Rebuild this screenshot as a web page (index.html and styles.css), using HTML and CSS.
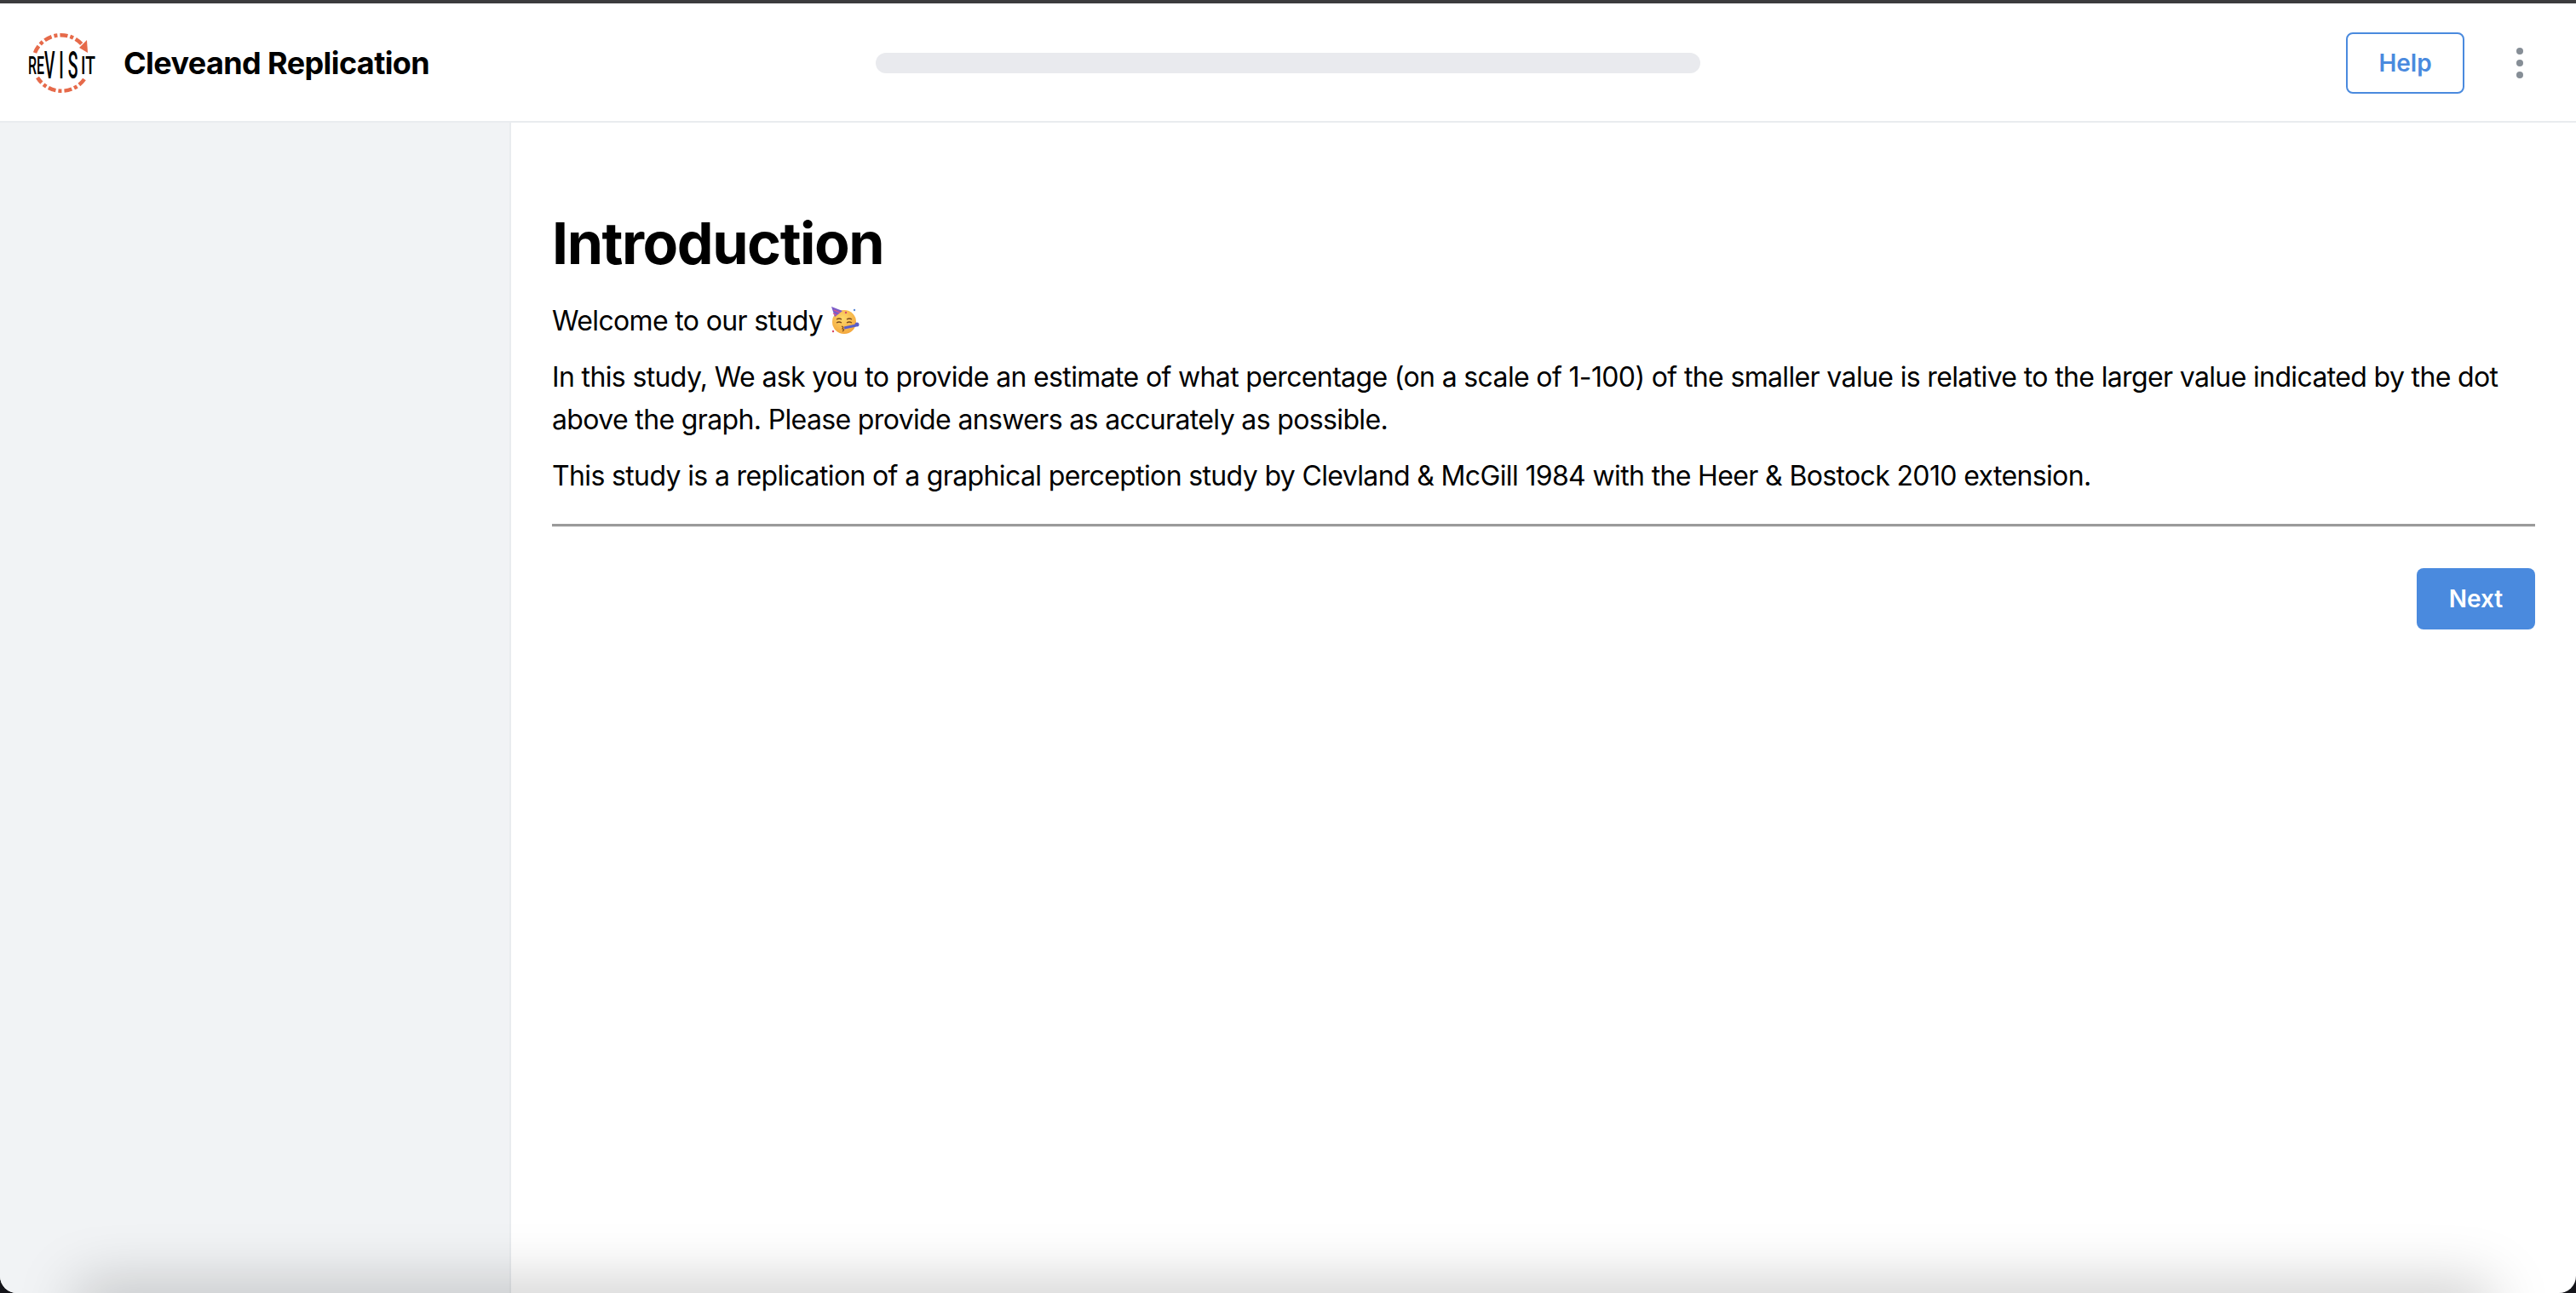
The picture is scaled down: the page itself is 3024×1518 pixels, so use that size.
FILE: index.html
```html
<!DOCTYPE html>
<html lang="en">

<head>
    <meta charset="UTF-8" />
    <meta name="viewport" content="width=device-width, initial-scale=1.0" />
    <title>Cleveand Replication</title>
    <link rel="stylesheet" href="styles.css">
</head>

<body>
    <div class="window">
        <header class="header">
            <div class="brand">
                <svg class="logo" viewBox="0 0 84 76" width="84" height="76">
                    <path class="logo-ring" d="M9 26 A33 33 0 0 1 65 17" />
                    <path class="logo-ring" d="M67 57 A33 33 0 0 1 12 55" />
                    <polygon class="logo-arrow" points="71,26 61,20 70,11" />
                    <text class="logo-small" transform="translate(1 51) scale(.55 1)">RE</text>
                    <text class="logo-big" transform="translate(20 56) scale(.44 1)">VIS</text>
                    <text class="logo-small" transform="translate(63 51) scale(.66 1)">IT</text>
                </svg>
                <span class="brand-name">Cleveand Replication</span>
            </div>
            <div class="progress"></div>
            <div class="actions">
                <button class="btn-help" type="button">Help</button>
                <div class="menu-dots"><i></i><i></i><i></i></div>
            </div>
        </header>

        <div class="body">
            <aside class="sidebar"></aside>
            <main class="content">
                <h1>Introduction</h1>
                <p>Welcome to our study <span class="emoji">
                    <svg viewBox="0 0 34 34" width="34" height="34">
                        <defs>
                            <radialGradient id="face" cx="0.45" cy="0.35" r="0.7">
                                <stop offset="0" stop-color="#fdd96a" />
                                <stop offset="1" stop-color="#f3a43a" />
                            </radialGradient>
                        </defs>
                        <circle cx="16" cy="18" r="14" fill="url(#face)" />
                        <polygon points="1,0 14,5 5,12" fill="#7c5cc8" />
                        <path d="M4 4 L11 7 M3 8 L7 10" stroke="#e0558a" stroke-width="1.2" />
                        <path d="M7 15 q3 -2 6 0 M19 15 q3 -2 6 0 M7 19 q3 -2 6 0 M19 19 q3 -2 6 0" fill="none" stroke="#7a4a1e" stroke-width="1.3" />
                        <path d="M13 23 q3 1 1 3 q3 1 0 3" fill="none" stroke="#7a4a1e" stroke-width="1.3" />
                        <path d="M16 25 L30 22" stroke="#5a5fc8" stroke-width="3" />
                        <circle cx="31" cy="21" r="2.5" fill="#5a5fc8" />
                        <circle cx="3" cy="29" r="1.2" fill="#d8486a" />
                        <circle cx="28" cy="4" r="1.2" fill="#5a8ad8" />
                        <circle cx="18" cy="7" r="1.2" fill="#d8486a" />
                    </svg>
                </span></p>
                <p>In this study, We ask you to provide an estimate of what percentage (on a scale of 1-100) of the smaller value is relative to the larger value indicated by the dot above the graph. Please provide answers as accurately as possible.</p>
                <p>This study is a replication of a graphical perception study by Clevland &amp; McGill 1984 with the Heer &amp; Bostock 2010 extension.</p>
                <hr class="rule" />
                <div class="next-row">
                    <button class="btn-next" type="button">Next</button>
                </div>
            </main>
        </div>

        <div class="bottom-shadow"></div>
    </div>
</body>

</html>
```
FILE: styles.css
```css
/* Page */

html,
body {
    margin: 0;
    height: 100%;
    background: #14151a;
}

body {
    font-family: Inter, "Noto Sans", sans-serif;
    color: #000;
    overflow: hidden;
}

.window {
    position: relative;
    height: 100%;
    box-sizing: border-box;
    display: flex;
    flex-direction: column;
    background: #fff;
    border-top: 4px solid #3c3c3e;
    border-radius: 0 0 20px 20px;
    overflow: hidden;
}
/* Header */

.header {
    height: 140px;
    flex: none;
    box-sizing: border-box;
    border-bottom: 2px solid #e9ecef;
    display: grid;
    grid-template-columns: 1fr 968px 1fr;
    align-items: center;
    padding: 1px 32px 0;
}

.brand {
    display: flex;
    align-items: center;
    gap: 29px;
}

.logo {
    display: block;
}

.logo-ring {
    fill: none;
    stroke: #e66a4a;
    stroke-width: 4.5;
    stroke-dasharray: 9 3 4 3;
}

.logo-arrow {
    fill: #e66a4a;
}

.logo-small,
.logo-big {
    font-family: Roboto, sans-serif;
    font-weight: 500;
    fill: #000;
}

.logo-small {
    font-size: 29px;
}

.logo-big {
    font-size: 44px;
    letter-spacing: 11px;
}

.brand-name {
    font-size: 36px;
    font-weight: 700;
    letter-spacing: -0.6px;
}

.progress {
    height: 24px;
    border-radius: 12px;
    background: #e9eaee;
}

.actions {
    display: flex;
    justify-content: flex-end;
    align-items: center;
    gap: 61px;
    padding-right: 30px;
}

.btn-help {
    width: 139px;
    height: 72px;
    background: #fff;
    border: 2px solid #4a8ade;
    border-radius: 8px;
    color: #4a8ade;
    font: 600 28px Inter, sans-serif;
}

.menu-dots {
    display: flex;
    flex-direction: column;
    gap: 6px;
}

.menu-dots i {
    display: block;
    width: 8px;
    height: 8px;
    border-radius: 50%;
    background: #868e96;
}
/* Layout */

.body {
    flex: 1;
    display: flex;
    min-height: 0;
}

.sidebar {
    width: 600px;
    box-sizing: border-box;
    flex: none;
    background: #f1f3f5;
    border-right: 2px solid #e9ecef;
}
/* Content */

.content {
    flex: 1;
    padding: 97px 48px 0 48px;
}

.content h1 {
    margin: 0 0 23px;
    font-size: 68px;
    line-height: 88px;
    font-weight: 700;
    letter-spacing: -1.45px;
}

.content p {
    margin: 0 0 16px;
    font-size: 32px;
    line-height: 50px;
    letter-spacing: -0.64px;
}

.emoji svg {
    vertical-align: -6px;
}

.rule {
    margin: 31px 0 48px;
    border: none;
    border-top: 3px solid #9a9a9a;
    border-bottom: 1px solid #eee;
}

.next-row {
    display: flex;
    justify-content: flex-end;
}

.btn-next {
    width: 139px;
    height: 72px;
    background: #4a8ade;
    border: none;
    border-radius: 8px;
    color: #fff;
    font: 600 28px Inter, sans-serif;
}
/* Shadow along the bottom edge */

.bottom-shadow {
    position: absolute;
    left: 100px;
    right: 110px;
    bottom: -40px;
    height: 40px;
    box-shadow: 0 0 70px 10px rgba(0, 0, 0, 0.22);
    pointer-events: none;
}
```
